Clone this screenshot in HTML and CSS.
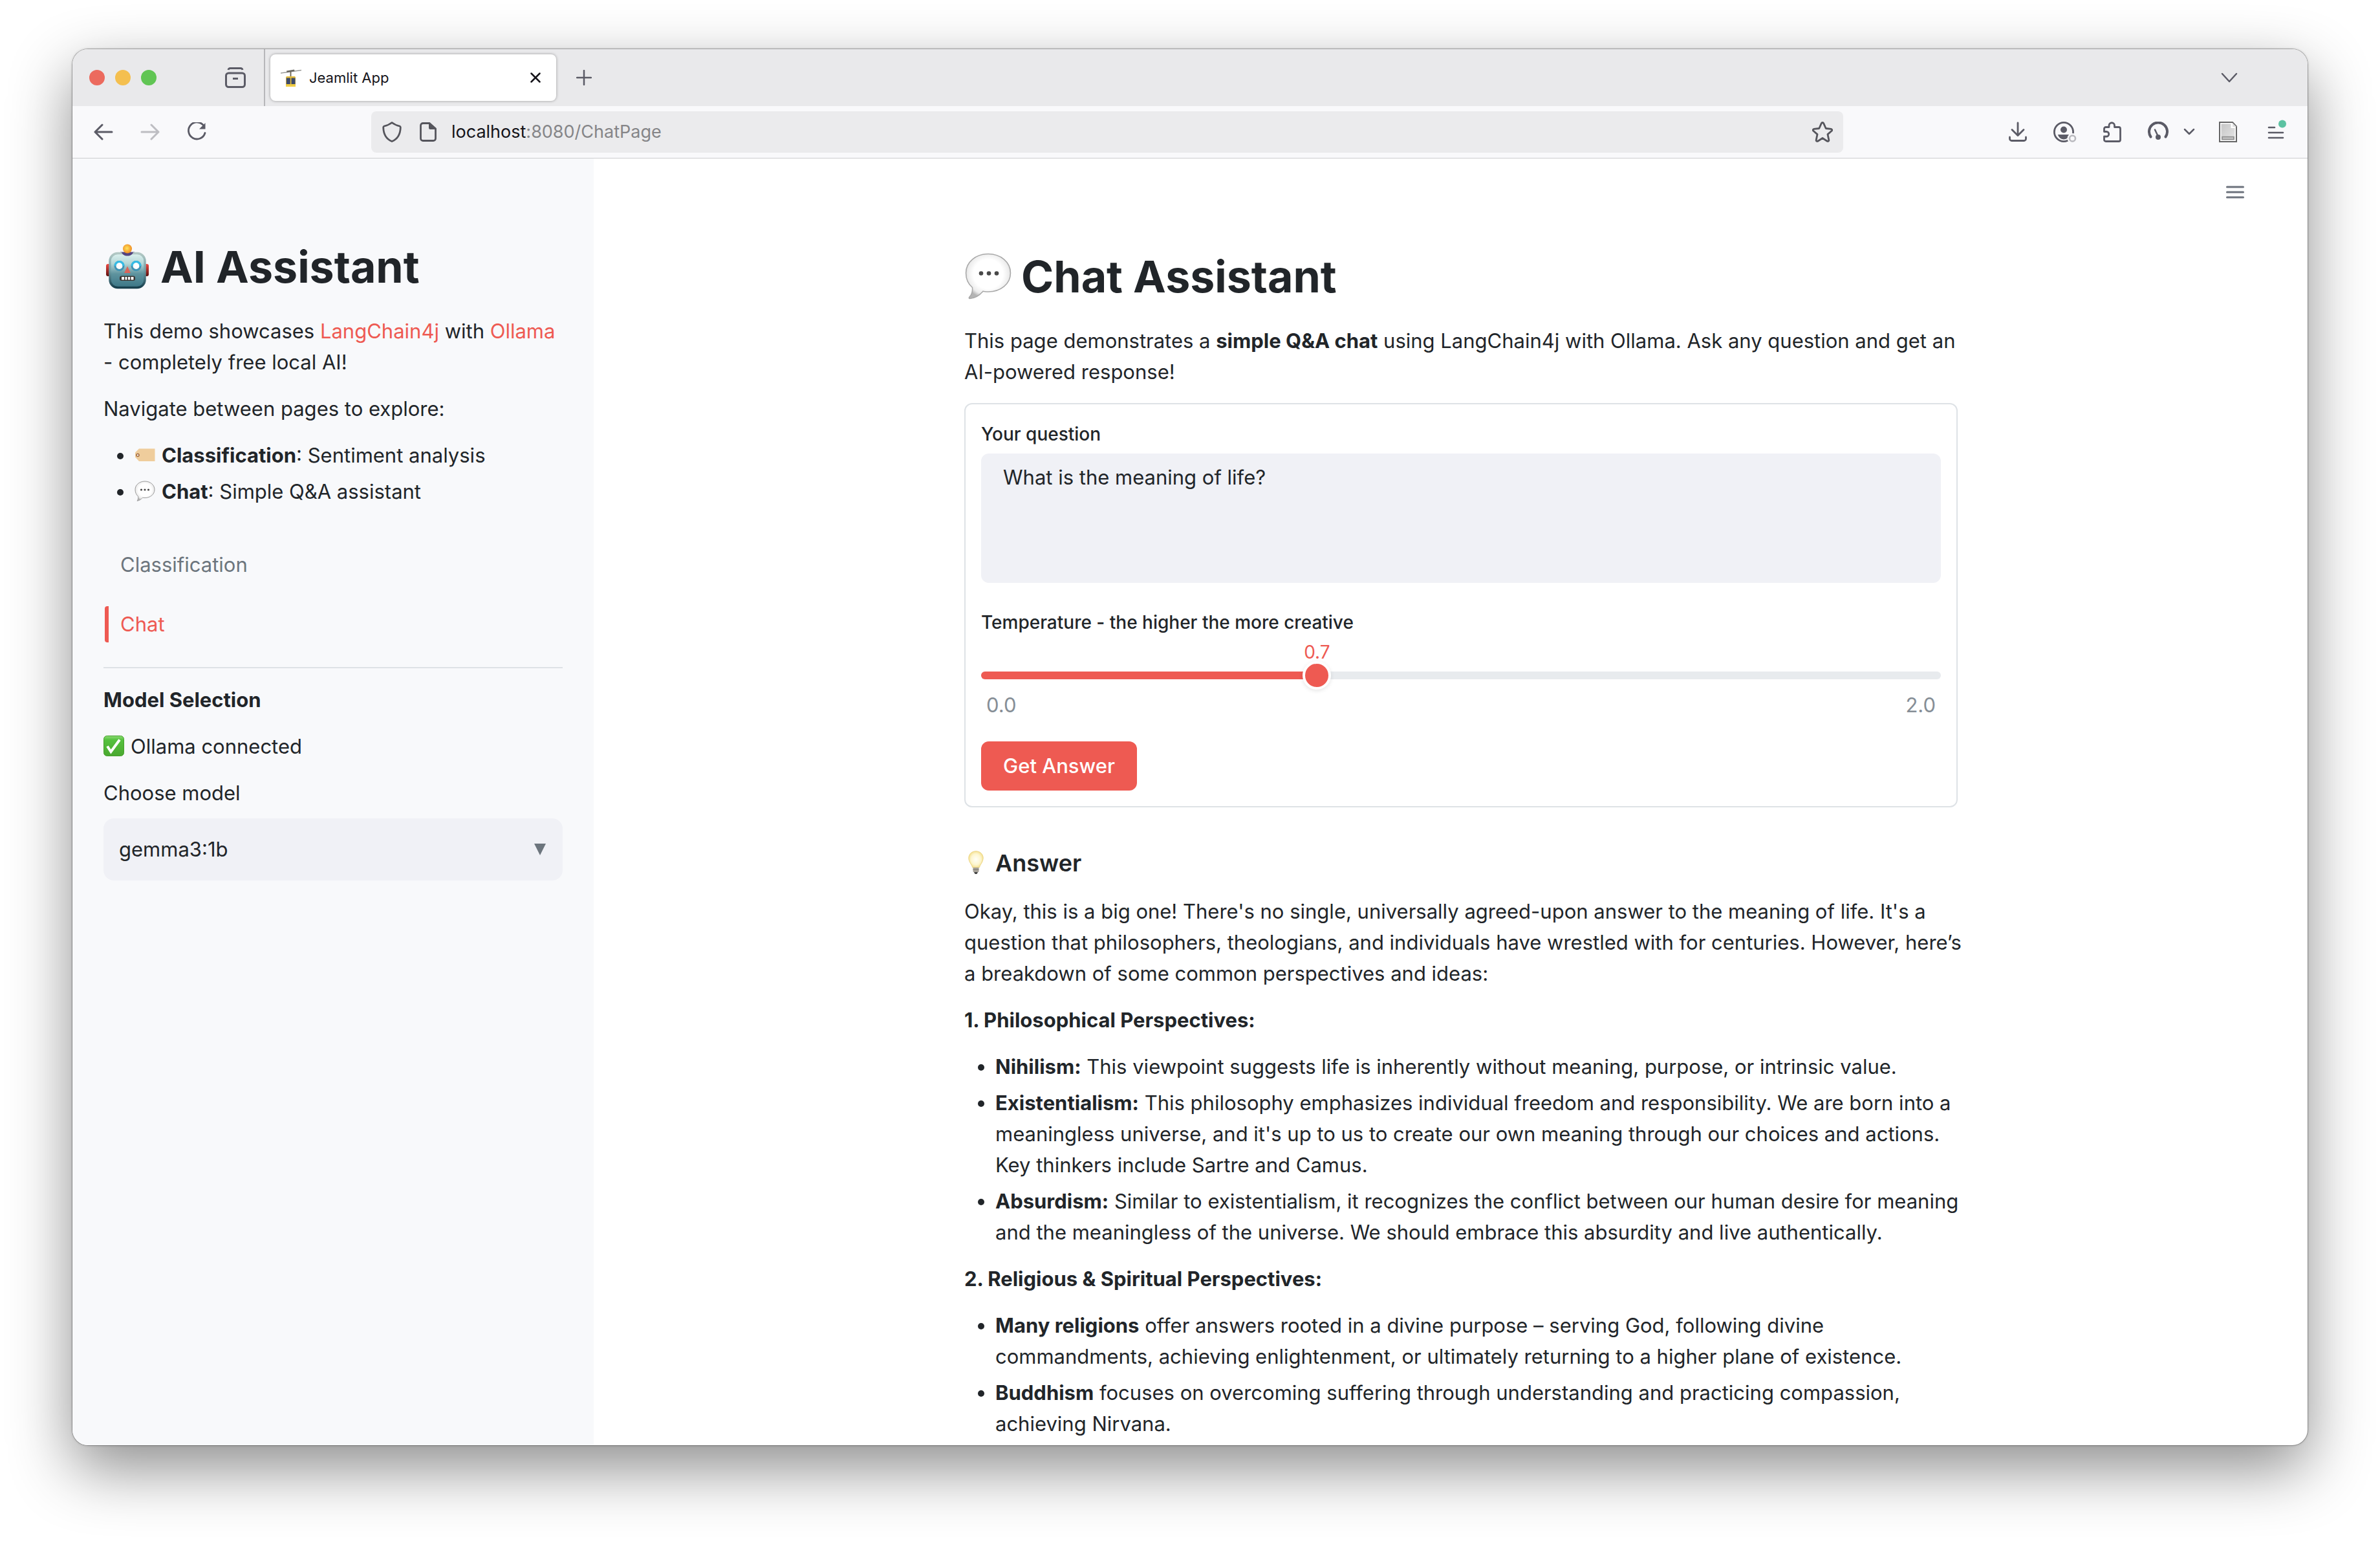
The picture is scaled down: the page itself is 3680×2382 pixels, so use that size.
FILE: index.html
```html
<!DOCTYPE html>
<html lang="en">
<head>
<meta charset="utf-8">
<meta name="viewport" content="width=device-width, initial-scale=1">
<title>Jeamlit App</title>
<link rel="stylesheet" href="styles.css">
</head>
<body>
<svg class="defs" width="0" height="0" aria-hidden="true">
  <defs>
    <radialGradient id="bubbleFill" cx="50%" cy="45%" r="55%">
      <stop offset="0.6" stop-color="#ffffff"/><stop offset="0.85" stop-color="#ececec"/><stop offset="1" stop-color="#b4b4b4"/>
    </radialGradient>
    <linearGradient id="robotFace" x1="0" y1="0" x2="0" y2="1">
      <stop offset="0" stop-color="#def3f0"/><stop offset="0.3" stop-color="#b5d6d6"/><stop offset="0.6" stop-color="#5e939e"/><stop offset="1" stop-color="#3b7585"/>
    </linearGradient>
    <linearGradient id="robotEdge" x1="0" y1="0" x2="0" y2="1">
      <stop offset="0" stop-color="#b3c8c4"/><stop offset="0.5" stop-color="#6f9fa6"/><stop offset="1" stop-color="#173f4d"/>
    </linearGradient>
    <linearGradient id="robotEar" x1="0" y1="0" x2="0" y2="1">
      <stop offset="0" stop-color="#f04a42"/><stop offset="1" stop-color="#5c100f"/>
    </linearGradient>
    <radialGradient id="robotBall" cx="45%" cy="45%" r="60%">
      <stop offset="0" stop-color="#ffe45c"/><stop offset="1" stop-color="#ee861f"/>
    </radialGradient>
    <linearGradient id="checkFill" x1="0" y1="0" x2="0" y2="1">
      <stop offset="0" stop-color="#8ddc74"/><stop offset="0.2" stop-color="#55c13e"/><stop offset="1" stop-color="#4aa82f"/>
    </linearGradient>
    <radialGradient id="bulbFill" cx="50%" cy="50%" r="55%">
      <stop offset="0" stop-color="#fffef6"/><stop offset="0.6" stop-color="#fdf6d0"/><stop offset="1" stop-color="#f3dc84"/>
    </radialGradient>
    <linearGradient id="pageFill" x1="0" y1="0" x2="1" y2="1">
      <stop offset="0" stop-color="#c6c6c6"/><stop offset="1" stop-color="#e6e6e6"/>
    </linearGradient>
    <symbol id="bubble" viewBox="0 0 72 72">
      <path d="M36 1.500C55 1.500 70.500 14 70.500 31S55 60 36 60c-3 0-5.500-.2-8-.8C23 65 15 70 7.500 70.500c-1.500 0-1.500-1.500-.5-2.500 4-4 5-8 4.500-14.500C5 48 1.500 40.500 1.500 31 1.500 14 17 1.500 36 1.500z" fill="url(#bubbleFill)" stroke="#a8a8a8" stroke-width="1.500"/>
      <g fill="#484848"><circle cx="25" cy="31.500" r="3.300"/><circle cx="37" cy="31.500" r="3.300"/><circle cx="49" cy="31.500" r="3.300"/></g>
    </symbol>
  </defs>
</svg>

<div class="window">
  <header class="tabstrip">
    <div class="lights"><span class="light red"></span><span class="light yellow"></span><span class="light green"></span></div>
    <button class="icon-btn view-btn" aria-label="Recent browsing">
      <svg width="32" height="32" viewBox="0 0 32 32" fill="none" stroke="#5b5b66" stroke-width="3"><rect x="1.500" y="9" width="29" height="21.500" rx="4"/><path d="M5 4c.5-2 1.500-2.500 3-2.500h16c1.500 0 2.500.5 3 2.500"/><path d="M12 17.500h8"/></svg>
    </button>
    <div class="tab">
      <svg class="favicon" width="32" height="32" viewBox="0 0 32 32"><path d="M0 9 32 4.500" stroke="#9a9a98" stroke-width="1.300"/><path d="M9 5.500 21 3.500l.5 2.500-12 2z" fill="#6a6862"/><path d="M15.500 7v8" stroke="#6b6350" stroke-width="1.800"/><path d="M8 16c0-1.500 1-2 2-2h11c1 0 2 .5 2 2v14H8z" fill="#e3bb3c"/><path d="M8.800 16.500h6V26h-6zM16.500 16.500h6V26h-6z" fill="#3c4a6b"/><path d="M8 26.500h15V30H8z" fill="#f0cd45"/></svg>
      <span class="tab-title">Jeamlit App</span>
      <button class="icon-btn" aria-label="Close tab"><svg width="16" height="16" viewBox="0 0 16 16" stroke="#15141a" stroke-width="2.500" stroke-linecap="round"><path d="M1.500 1.500l13 13M14.500 1.500l-13 13"/></svg></button>
    </div>
    <button class="icon-btn new-tab" aria-label="New tab"><svg width="24" height="24" viewBox="0 0 24 24" stroke="#5b5b66" stroke-width="2.500" stroke-linecap="round"><path d="M12 1v22M1 12h22"/></svg></button>
    <button class="icon-btn tab-list" aria-label="List all tabs"><svg width="26" height="16" viewBox="0 0 26 16" fill="none" stroke="#5b5b66" stroke-width="2.500" stroke-linecap="round" stroke-linejoin="round"><path d="M2 2l11 12L24 2"/></svg></button>
  </header>

  <div class="toolbar">
    <div class="nav-buttons">
      <button class="icon-btn" aria-label="Back"><svg width="30" height="28" viewBox="0 0 30 28" fill="none" stroke="#5b5b66" stroke-width="3" stroke-linecap="round" stroke-linejoin="round"><path d="M28 14H2M13 3 2 14l11 11"/></svg></button>
      <button class="icon-btn" aria-label="Forward" disabled><svg width="30" height="28" viewBox="0 0 30 28" fill="none" stroke="#bdbdc2" stroke-width="3" stroke-linecap="round" stroke-linejoin="round"><path d="M2 14h26M17 3l11 11-11 11"/></svg></button>
      <button class="icon-btn" aria-label="Reload"><svg width="30" height="30" viewBox="0 0 30 30"><path d="M26.500 6A13 13 0 1 0 28 16.500" fill="none" stroke="#5b5b66" stroke-width="2.800" stroke-linecap="round"/><path d="M28.500 1v9.500H19z" fill="#5b5b66"/></svg></button>
    </div>
    <div class="urlbar">
      <svg width="30" height="32" viewBox="0 0 30 32" fill="none" stroke="#55555c" stroke-width="2.800" stroke-linejoin="round"><path d="M15 1.500c4 3.200 8 4.500 12 5.500.9.300 1.300 1 1.300 2C28 19 24 27 15 30.500 6 27 2 19 1.700 9c0-1 .4-1.700 1.300-2 4-1 8-2.300 12-5.500z"/></svg>
      <svg width="26" height="30" viewBox="0 0 26 30"><path d="M5 1.500h10L24.500 10v15a3.500 3.500 0 0 1-3.500 3.500H5A3.500 3.500 0 0 1 1.500 25V5A3.500 3.500 0 0 1 5 1.500z" fill="none" stroke="#55555c" stroke-width="2.800"/><path d="M14 1l11 10h-8.500A2.500 2.500 0 0 1 14 8.500z" fill="#55555c"/></svg>
      <span class="url"><span class="host">localhost</span>:8080/ChatPage</span>
      <button class="icon-btn" aria-label="Bookmark this page"><svg width="32" height="32" viewBox="0 0 32 32" fill="none" stroke="#55555c" stroke-width="2.800" stroke-linejoin="round"><path d="M14.300 2.600c.7-1.500 2.700-1.500 3.400 0l3.500 7.900 8 .8c1.500.2 2 2 1 3l-6.200 5.300 1.800 8.800c.3 1.500-1.200 2.500-2.500 1.800L16 25.500l-7.300 4.700c-1.300.7-2.800-.3-2.500-1.800L8 19.600 1.800 14.300c-1-1-.5-2.800 1-3l8-.8z"/></svg></button>
    </div>
    <div class="tools">
      <button class="icon-btn" aria-label="Downloads"><svg width="28" height="32" viewBox="0 0 28 32" fill="none" stroke="#5b5b66" stroke-width="2.800" stroke-linecap="round" stroke-linejoin="round"><path d="M14 2v19M5 12.500l9 9 9-9M1.500 24v2.500A3 3 0 0 0 4.500 29.500h19a3 3 0 0 0 3-3V24"/></svg></button>
      <button class="icon-btn" aria-label="Account"><svg width="36" height="32" viewBox="0 0 36 32"><circle cx="16" cy="16" r="14.600" fill="none" stroke="#5b5b66" stroke-width="2.800"/><circle cx="16" cy="12.500" r="5" fill="#5b5b66"/><path d="M7 20h18c-1 4.500-5 7.500-9 7.500S8 24.500 7 20z" fill="#5b5b66"/><circle cx="29.500" cy="26" r="8" fill="#f9f9fb"/><circle cx="29.500" cy="26" r="4.500" fill="none" stroke="#b9b9be" stroke-width="2.600"/></svg></button>
      <button class="icon-btn" aria-label="Extensions"><svg width="28" height="32" viewBox="0 0 28 32" fill="none" stroke="#5b5b66" stroke-width="2.800" stroke-linejoin="round"><path d="M1.500 15.500V11A2.500 2.500 0 0 1 4 8.500h5V6a4 4 0 0 1 8.500 0v2.500H24a2.500 2.500 0 0 1 2.500 2.500v17a2.500 2.500 0 0 1-2.500 2.500H4A2.500 2.500 0 0 1 1.500 28v-5H5a3.700 3.700 0 0 0 0-7.500z"/></svg></button>
      <button class="icon-btn" aria-label="Performance"><svg width="32" height="32" viewBox="0 0 32 32" fill="none" stroke="#5b5b66"><path d="M4.500 23.500A14 14 0 1 1 27.500 23.500" stroke-width="4" stroke-linecap="round"/><path d="M11 12.500 16 23" stroke-width="2.500" stroke-linecap="round"/><circle cx="16" cy="24" r="4" fill="#5b5b66" stroke="none"/></svg></button>
      <button class="icon-btn chev" aria-label="More"><svg width="18" height="12" viewBox="0 0 18 12" fill="none" stroke="#5b5b66" stroke-width="2.500" stroke-linecap="round" stroke-linejoin="round"><path d="M2 2l7 7 7-7"/></svg></button>
      <button class="icon-btn" aria-label="Page tools"><svg width="28" height="32" viewBox="0 0 28 32"><path d="M1 1h20l6 6.500V31H1z" fill="#fff" stroke="#666" stroke-width="2"/><path d="M3.500 3.500h15v6.500h6V28.500h-21z" fill="url(#pageFill)"/><path d="M21 2v6h6z" fill="#ddd"/><path d="M5 23.500h18v4H5z" fill="#c4c4c4" stroke="#8c8c8c" stroke-width="1.500"/></svg></button>
      <button class="icon-btn app-menu" aria-label="Application menu"><svg width="30" height="38" viewBox="0 0 30 38" stroke="#5b5b66" stroke-width="2.600" stroke-linecap="round"><path d="M2 12h9M2 20h22M2 28h22"/><circle cx="23" cy="6.500" r="6" fill="#5cc2a2" stroke="none"/></svg></button>
    </div>
  </div>

  <div class="page">
    <aside class="sidebar">
      <h1><svg class="emoji-lg" viewBox="0 0 72 72" role="img" aria-label="robot"><path d="M25 13.500h22c-1 4-5 6.500-11 6.500s-10-2.500-11-6.500z" fill="#54447f"/><rect x="3" y="32" width="7" height="19" rx="3" fill="url(#robotEar)"/><rect x="62" y="32" width="7" height="19" rx="3" fill="url(#robotEar)"/><rect x="9" y="15.500" width="54" height="53" rx="12" fill="url(#robotFace)" stroke="url(#robotEdge)" stroke-width="3.500"/><path d="M27 14h18c-1 3.500-4.500 5.500-9 5.500S28 17.500 27 14z" fill="#54447f"/><circle cx="36" cy="8.500" r="7" fill="url(#robotBall)"/><g fill="#fff" stroke="#3f93b4" stroke-width="3"><circle cx="23.500" cy="35" r="6.500"/><circle cx="49.500" cy="35" r="6.500"/></g><path d="M17 35a6.500 6.500 0 0 1 13 0M43 35a6.500 6.500 0 0 1 13 0" fill="none" stroke="#35bce6" stroke-width="3"/><path d="M36 35.500 41 46H31z" fill="#dc6459"/><rect x="24" y="50.500" width="24" height="7.500" rx="3" fill="#3a3431"/><path d="M27 52h4v4.500h-4zM32.500 52h3v4.500h-3zM37 52h3v4.500h-3zM41.500 52h4v4.500h-4z" fill="#fff"/></svg>AI Assistant</h1>
      <div class="prose">
        <p>This demo showcases <a href="#langchain4j">LangChain4j</a> with <a href="#ollama">Ollama</a> - completely free local AI!</p>
        <p>Navigate between pages to explore:</p>
        <ul>
          <li><svg class="emoji" viewBox="0 0 32 32" role="img" aria-label="label"><path d="M7 6.500h24.500v19.500H7L1 19.500v-7z" fill="#efcd9c"/><circle cx="5" cy="16.500" r="2" fill="#fff" stroke="#a0673c" stroke-width="1.500"/></svg><strong>Classification</strong>: Sentiment analysis</li>
          <li><svg class="emoji" viewBox="0 0 32 32" role="img" aria-label="speech"><path d="M16 1c8.500 0 15 5.500 15 12.800S24.500 26.500 16 26.500c-1.200 0-2.400-.1-3.500-.3C10 29 7 31 4 31.200c1.500-2 2-4 1.500-7C2.500 21.500 1 18 1 13.800 1 6.500 7.500 1 16 1z" fill="url(#bubbleFill)" stroke="#9c9c9c"/><g fill="#484848"><circle cx="10.500" cy="14" r="1.600"/><circle cx="16" cy="14" r="1.600"/><circle cx="21.500" cy="14" r="1.600"/></g></svg><strong>Chat</strong>: Simple Q&amp;A assistant</li>
        </ul>
      </div>
      <nav class="page-nav">
        <a href="#classification">Classification</a>
        <a class="active" href="#chat">Chat</a>
      </nav>
      <hr>
      <div class="prose">
        <p><strong>Model Selection</strong></p>
        <p><svg class="emoji" viewBox="0 0 32 32" role="img" aria-label="check"><rect x=".5" y=".5" width="31" height="31" rx="5" fill="url(#checkFill)" stroke="#46a02d"/><path d="M6 16.500l5.500 8.500L25 6.500" fill="none" stroke="#fff" stroke-width="4"/></svg>Ollama connected</p>
        <p><label for="model">Choose model</label></p>
      </div>
      <div class="select-wrap">
        <select id="model"><option>gemma3:1b</option></select>
        <svg width="18" height="18" viewBox="0 0 18 18" aria-hidden="true"><path d="M0 0h18L9 18z" fill="#6c757d"/></svg>
      </div>
    </aside>

    <main class="main">
      <button class="icon-btn page-menu" aria-label="Menu"><svg width="28" height="20" viewBox="0 0 28 20" stroke="#6c727c" stroke-width="3" stroke-linecap="round"><path d="M1.500 2h25M1.500 10h25M1.500 18h25"/></svg></button>
      <div class="content">
        <h1><svg class="emoji-lg" role="img" aria-label="speech"><use href="#bubble"/></svg>Chat Assistant</h1>
        <p>This page demonstrates a <strong>simple Q&amp;A chat</strong> using LangChain4j with Ollama. Ask any question and get an AI-powered response!</p>
        <form class="card">
          <label for="question">Your question</label>
          <textarea id="question">What is the meaning of life?</textarea>
          <label for="temperature">Temperature - the higher the more creative</label>
          <output class="value" for="temperature" style="margin-left: calc(35% - 40px)">0.7</output>
          <div class="slider">
            <div class="track"><div class="fill" style="width: 35%"></div></div>
            <input type="range" id="temperature" min="0" max="2" step="0.1" value="0.7">
          </div>
          <div class="range-ends"><span>0.0</span><span>2.0</span></div>
          <button class="primary" type="button">Get Answer</button>
        </form>
        <h3><svg class="emoji" viewBox="0 0 32 36" role="img" aria-label="idea"><path d="M16 .8c6.800 0 11.200 4.700 11.200 10.700 0 6-4.700 9.500-6 14.500h-10.400c-1.300-5-6-8.500-6-14.500C4.800 5.500 9.200.8 16 .8z" fill="url(#bulbFill)" stroke="#ecd583"/><path d="M11.500 26h9v6c0 2-9 2-9 0z" fill="#a9a49a"/><path d="M11.500 29h9" stroke="#77736b"/><path d="M13 33h6l-1.500 3h-3z" fill="#444"/></svg>Answer</h3>
        <div class="prose answer">
          <p>Okay, this is a big one! There's no single, universally agreed-upon answer to the meaning of life. It's a question that philosophers, theologians, and individuals have wrestled with for centuries. However, here’s a breakdown of some common perspectives and ideas:</p>
          <p><strong>1. Philosophical Perspectives:</strong></p>
          <ul>
            <li><strong>Nihilism:</strong> This viewpoint suggests life is inherently without meaning, purpose, or intrinsic value.</li>
            <li><strong>Existentialism:</strong> This philosophy emphasizes individual freedom and responsibility. We are born into a meaningless universe, and it's up to us to create our own meaning through our choices and actions. Key thinkers include Sartre and Camus.</li>
            <li><strong>Absurdism:</strong> Similar to existentialism, it recognizes the conflict between our human desire for meaning and the meaningless of the universe. We should embrace this absurdity and live authentically.</li>
          </ul>
          <p><strong>2. Religious &amp; Spiritual Perspectives:</strong></p>
          <ul>
            <li><strong>Many religions</strong> offer answers rooted in a divine purpose – serving God, following divine commandments, achieving enlightenment, or ultimately returning to a higher plane of existence.</li>
            <li><strong>Buddhism</strong> focuses on overcoming suffering through understanding and practicing compassion, achieving Nirvana.</li>
          </ul>
        </div>
      </div>
    </main>
  </div>
</div>
</body>
</html>
```

FILE: styles.css
```css
* { box-sizing: border-box; }

body {
  margin: 0;
  min-height: 100vh;
  padding: 76px 112px 148px;
  display: flex;
  flex-direction: column;
  background: #fff;
  color: #212529;
  font: 31px/48px Inter, "Liberation Sans", sans-serif;
}

button, select, textarea, input { font: inherit; color: inherit; }
a { color: #ee5a52; text-decoration: none; }
h1, h3, p, ul { margin: 0; }
strong { font-weight: 700; }
svg { flex: none; display: block; }
.defs { position: absolute; }

.window {
  flex: 1;
  display: flex;
  flex-direction: column;
  border-radius: 24px;
  overflow: hidden;
  background: #fff;
  box-shadow: 0 0 0 1px rgba(0, 0, 0, .25), 0 0 4px rgba(0, 0, 0, .2), 0 36px 96px rgba(0, 0, 0, .45);
}

.icon-btn {
  display: flex;
  padding: 0;
  border: 0;
  background: none;
}

/* Tab strip */
.tabstrip {
  display: flex;
  align-items: center;
  height: 88px;
  padding-right: 108px;
  background: #e9e9eb;
}
.lights { display: flex; gap: 16px; margin-left: 26px; }
.light { width: 24px; height: 24px; border-radius: 50%; }
.red { background: #ec6a5e; }
.yellow { background: #f4bf4f; }
.green { background: #61c554; }
.view-btn {
  align-self: stretch;
  align-items: center;
  margin-left: 106px;
  padding-right: 28px;
  border-right: 2px solid #b7b7ba;
}
.tab {
  display: flex;
  align-items: center;
  width: 442px;
  height: 72px;
  margin-left: 8px;
  padding: 0 24px 0 16px;
  border-radius: 8px;
  background: #fff;
  box-shadow: 0 0 4px rgba(0, 0, 0, .35);
}
.tab-title { flex: 1; margin-left: 12px; font-size: 22px; color: #15141a; }
.new-tab { margin-left: 31px; }
.tab-list { margin-left: auto; }

/* Navigation toolbar */
.toolbar {
  display: flex;
  align-items: center;
  height: 81px;
  padding: 0 32px 0 33px;
  border-bottom: 1px solid #cccccf;
  background: #f9f9fb;
}
.nav-buttons { display: flex; align-items: center; gap: 42px; }
.urlbar {
  display: flex;
  align-items: center;
  flex: 0 1 2276px;
  height: 64px;
  margin-left: 255px;
  padding: 0 16px 0 17px;
  border-radius: 8px;
  background: #ebebed;
}
.urlbar svg + svg { margin-left: 28px; }
.url { flex: 1; margin-left: 23px; font-size: 27px; color: #858588; }
.host { color: #15141a; }
.tools { display: flex; align-items: center; gap: 41px; margin-left: auto; }
.chev { margin: 0 -4px 0 -18px; }
.app-menu { margin-left: 6px; }

/* Page */
.page { flex: 1; display: flex; }
.sidebar {
  flex: none;
  width: 806px;
  padding: 124px 48px 48px;
  background: #f8f9fb;
}
h1 {
  display: flex;
  align-items: center;
  gap: 14px;
  margin-bottom: 33px;
  font-size: 68px;
  line-height: 86px;
  font-weight: 700;
}
.emoji-lg { width: 74px; height: 72px; }
.emoji { display: inline-block; width: 32px; height: 32px; margin-right: 10px; vertical-align: -4px; }
.prose { display: flex; flex-direction: column; gap: 24px; }
ul { display: flex; flex-direction: column; gap: 8px; padding-left: 48px; }

.page-nav { display: flex; flex-direction: column; gap: 36px; margin-top: 61px; }
.page-nav a { padding: 4px 0 4px 18px; border-left: 6px solid transparent; border-radius: 4px; margin-left: 2px; color: #6c757d; }
.page-nav .active { border-left-color: #ee5a52; color: #ee5a52; }
hr { height: 2px; margin: 38px 0 25px; border: 0; background: #dee2e6; }

.select-wrap { display: grid; align-items: center; margin-top: 15px; }
.select-wrap > * { grid-area: 1 / 1; }
.select-wrap svg { justify-self: end; margin-right: 26px; pointer-events: none; }
.select-wrap select {
  height: 96px;
  padding: 0 24px;
  border: 0;
  border-radius: 16px;
  background: #f0f1f6;
  appearance: none;
}

.main { position: relative; flex: 1; padding: 139px 32px 8px 64px; }
.page-menu { position: absolute; top: 42px; right: 98px; }
.content { max-width: 1536px; margin: 0 auto; }
.answer { margin-right: -16px; }

.card {
  display: flex;
  flex-direction: column;
  margin: 24px 0 62px;
  padding: 24px;
  border: 2px solid #dee2e6;
  border-radius: 12px;
}
.card label { font-size: 28px; line-height: 44px; font-weight: 500; }
.card textarea {
  height: 200px;
  margin: 8px 0 39px;
  padding: 13px 34px;
  border: 0;
  border-radius: 12px;
  background: #f0f1f6;
  resize: none;
}
.value { width: 80px; margin-top: 8px; font-size: 28px; line-height: 32px; text-align: center; color: #ee5a52; }
.slider { display: grid; align-items: center; height: 40px; }
.slider > * { grid-area: 1 / 1; }
.track { height: 12px; border-radius: 6px; overflow: hidden; background: #e8ebee; }
.fill { height: 100%; background: #ee5a52; }
.slider input { height: 40px; margin: 0 -22px; background: none; appearance: none; }
.slider input::-webkit-slider-runnable-track { background: none; }
.slider input::-webkit-slider-thumb {
  appearance: none;
  width: 44px;
  height: 44px;
  border: 4px solid #fff;
  border-radius: 50%;
  background: #ee5a52;
  box-shadow: 0 2px 6px rgba(0, 0, 0, .1);
}
.range-ends { display: flex; justify-content: space-between; margin: 4px 0 34px; padding: 0 8px; line-height: 44px; color: #868e96; }
.primary {
  align-self: flex-start;
  height: 76px;
  padding: 0 34px;
  border: 0;
  border-radius: 12px;
  background: #ee5a52;
  color: #fff;
  font-weight: 500;
}

h3 { margin-bottom: 27px; font-size: 36px; font-weight: 600; }
h3 .emoji { width: 36px; height: 36px; margin-right: 12px; }
```
